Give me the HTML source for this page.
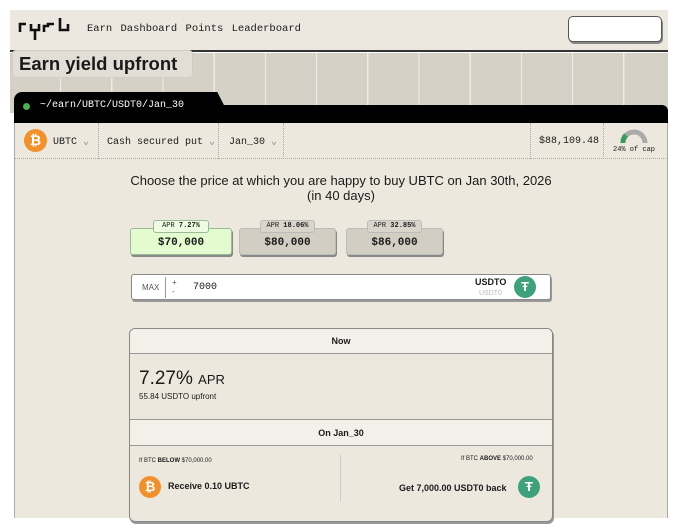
<!DOCTYPE html><html><head><style>
*{box-sizing:border-box;margin:0;padding:0}
body{width:680px;height:528px;background:#fff;font-family:"Liberation Sans",sans-serif;position:relative;overflow:hidden;color:#1a1a1a}
.mono{font-family:"Liberation Mono",monospace}
.abs{position:absolute}
</style></head><body>
<div class="abs" style="left:10px;top:10px;width:658px;height:42px;background:#ece8df;border-bottom:2px solid #333"></div>
<svg class="abs" style="left:18px;top:16px" width="52" height="26" fill="none" stroke="#111" stroke-width="2.6"><path d="M2 16V8H8M13 8V14H21V8M17 14V24M26 16V10H30V8H36M42 2V14H50V8"/></svg>
<div class="abs mono" style="left:87px;top:23px;font-size:10.5px;word-spacing:2px">Earn Dashboard Points Leaderboard</div>
<div class="abs" style="left:568px;top:16px;width:94px;height:26px;background:#fff;border:1px solid #555;border-radius:5px;box-shadow:1px 2px 0 #888"></div>
<div class="abs" style="left:10px;top:53px;width:658px;height:60px;background:#d6d1c7;background-image:repeating-linear-gradient(90deg,transparent 0 50px,#f0ede7 50px 51.2px);background-position:0 0"></div>
<div class="abs" style="left:12px;top:50px;width:181px;height:28px;background:#e2ded5;border-radius:4px;font-size:18.5px;font-weight:bold;padding:2px 6px 0 6px;white-space:nowrap;border:1px solid #d0ccc3">Earn yield upfront</div>
<div class="abs" style="left:14px;top:92px;width:214px;height:21px;background:#000;border-radius:8px 8px 0 0;clip-path:polygon(0 0,95% 0,100% 100%,0 100%)"></div>
<div class="abs" style="left:14px;top:105px;width:654px;height:18px;background:#000;border-radius:0 6px 0 0"></div>
<div class="abs" style="left:23px;top:103px;width:7px;height:7px;border-radius:50%;background:#4caf50"></div>
<div class="abs mono" style="left:40px;top:100px;font-size:10px;color:#fff">~/earn/UBTC/USDT0/Jan_30</div>
<div class="abs" style="left:14px;top:123px;width:654px;height:395px;background:#ece8de;border-left:1px solid #aaa;border-right:1px solid #aaa"></div>
<div class="abs" style="left:14px;top:123px;width:654px;height:36px;border-bottom:1px dotted #aaa"></div>
<div class="abs" style="left:24px;top:129px;width:23px;height:23px;border-radius:50%;background:#f0912e;color:#fff;font-weight:bold;font-size:14px;text-align:center;line-height:23px">₿</div>
<div class="abs mono" style="left:53px;top:136px;font-size:10px">UBTC <span style="color:#888">⌄</span></div>
<div class="abs" style="left:98px;top:123px;width:1px;height:36px;border-left:1px dotted #aaa"></div>
<div class="abs mono" style="left:107px;top:136px;font-size:10px">Cash secured put <span style="color:#888">⌄</span></div>
<div class="abs" style="left:218px;top:123px;height:36px;border-left:1px dotted #aaa"></div>
<div class="abs mono" style="left:229px;top:136px;font-size:10px">Jan_30 <span style="color:#888">⌄</span></div>
<div class="abs" style="left:283px;top:123px;height:36px;border-left:1px dotted #aaa"></div>
<div class="abs" style="left:530px;top:123px;height:36px;border-left:1px dotted #aaa"></div>
<div class="abs mono" style="left:539px;top:136px;font-size:10px">$88,109.48</div>
<div class="abs" style="left:603px;top:123px;height:36px;border-left:1px dotted #aaa"></div>
<svg class="abs" style="left:620px;top:129px" width="28" height="15"><path d="M3 14A11 11 0 0 1 25 14" fill="none" stroke="#aaa" stroke-width="5"/><path d="M3 14A11 11 0 0 1 6 6" fill="none" stroke="#3c9a5f" stroke-width="5"/></svg>
<div class="abs mono" style="left:613px;top:146px;font-size:7px">24% of cap</div>
<div class="abs" style="left:14px;top:173px;width:654px;text-align:center;font-size:13px;line-height:15px">Choose the price at which you are happy to buy UBTC on Jan 30th, 2026<br>(in 40 days)</div>
<div class="abs mono" style="left:130px;top:228px;width:102px;height:27px;background:#e4fbd0;border:1px solid #9b9;border-radius:3px;box-shadow:1px 2px 0 #888;font-weight:bold;font-size:11px;text-align:center;padding-top:8px">$70,000</div>
<div class="abs mono" style="left:153px;top:220px;width:56px;height:13px;background:#eefce4;border:1px solid #9b9;border-radius:3px;font-size:7px;text-align:center;line-height:11px">APR <b>7.27%</b></div>
<div class="abs mono" style="left:239px;top:228px;width:97px;height:27px;background:#d3cec3;border:1px solid #bbb;border-radius:3px;box-shadow:1px 2px 0 #888;font-weight:bold;font-size:11px;text-align:center;padding-top:8px">$80,000</div>
<div class="abs mono" style="left:260px;top:220px;width:55px;height:13px;background:#d9d5cb;border:1px solid #bbb;border-radius:3px;font-size:7px;text-align:center;line-height:11px">APR <b>18.06%</b></div>
<div class="abs mono" style="left:346px;top:228px;width:97px;height:27px;background:#d3cec3;border:1px solid #bbb;border-radius:3px;box-shadow:1px 2px 0 #888;font-weight:bold;font-size:11px;text-align:center;padding-top:8px">$86,000</div>
<div class="abs mono" style="left:367px;top:220px;width:55px;height:13px;background:#d9d5cb;border:1px solid #bbb;border-radius:3px;font-size:7px;text-align:center;line-height:11px">APR <b>32.85%</b></div>
<div class="abs" style="left:131px;top:274px;width:420px;height:26px;background:#fff;border:1px solid #888;border-radius:3px;box-shadow:1px 2px 0 #999"></div>
<div class="abs" style="left:142px;top:283px;font-size:8px;color:#555">MAX</div>
<div class="abs" style="left:165px;top:277px;height:21px;border-left:1px solid #999"></div>
<div class="abs" style="left:172px;top:278px;font-size:8px;line-height:9px;color:#555">+<br>-</div>
<div class="abs mono" style="left:193px;top:282px;font-size:10px">7000</div>
<div class="abs" style="left:475px;top:277px;font-size:9px;font-weight:bold">USDTO</div>
<div class="abs" style="left:479px;top:290px;font-size:7px;color:#bbb">USDT0</div>
<div class="abs" style="left:514px;top:276px;width:22px;height:22px;border-radius:50%;background:#3fa07c;color:#fff;font-weight:bold;font-size:13px;text-align:center;line-height:22px">Ŧ</div>
<div class="abs" style="left:129px;top:328px;width:424px;height:194px;border:1px solid #888;border-radius:6px;box-shadow:1px 2px 0 #999;background:#ece8de;overflow:hidden">
 <div style="height:25px;background:#f3f0ea;border-bottom:1px solid #999;text-align:center;font-size:9px;font-weight:bold;line-height:25px">Now</div>
 <div style="padding:14px 0 0 9px;font-size:19px;height:65px">7.27% <span style="font-size:13px">APR</span><div style="font-size:8px;margin-top:2px">55.84 USDTO upfront</div></div>
 <div style="height:27px;background:#f3f0ea;border-top:1px solid #999;border-bottom:1px solid #999;text-align:center;font-size:9px;font-weight:bold;line-height:27px">On Jan_30</div>
</div>
<div class="abs" style="left:139px;top:458px;font-size:6px">If BTC <b>BELOW</b> $70,000.00</div>
<div class="abs" style="left:461px;top:456px;font-size:6px">If BTC <b>ABOVE</b> $70,000.00</div>
<div class="abs" style="left:340px;top:455px;height:46px;border-left:1px solid #ccc"></div>
<div class="abs" style="left:139px;top:476px;width:22px;height:22px;border-radius:50%;background:#f0912e;color:#fff;font-weight:bold;font-size:13px;text-align:center;line-height:22px">₿</div>
<div class="abs" style="left:168px;top:481px;font-size:9px;font-weight:bold">Receive 0.10 UBTC</div>
<div class="abs" style="left:399px;top:483px;font-size:9px;font-weight:bold">Get 7,000.00 USDT0 back</div>
<div class="abs" style="left:518px;top:476px;width:22px;height:22px;border-radius:50%;background:#3fa07c;color:#fff;font-weight:bold;font-size:13px;text-align:center;line-height:22px">Ŧ</div>
</body></html>
